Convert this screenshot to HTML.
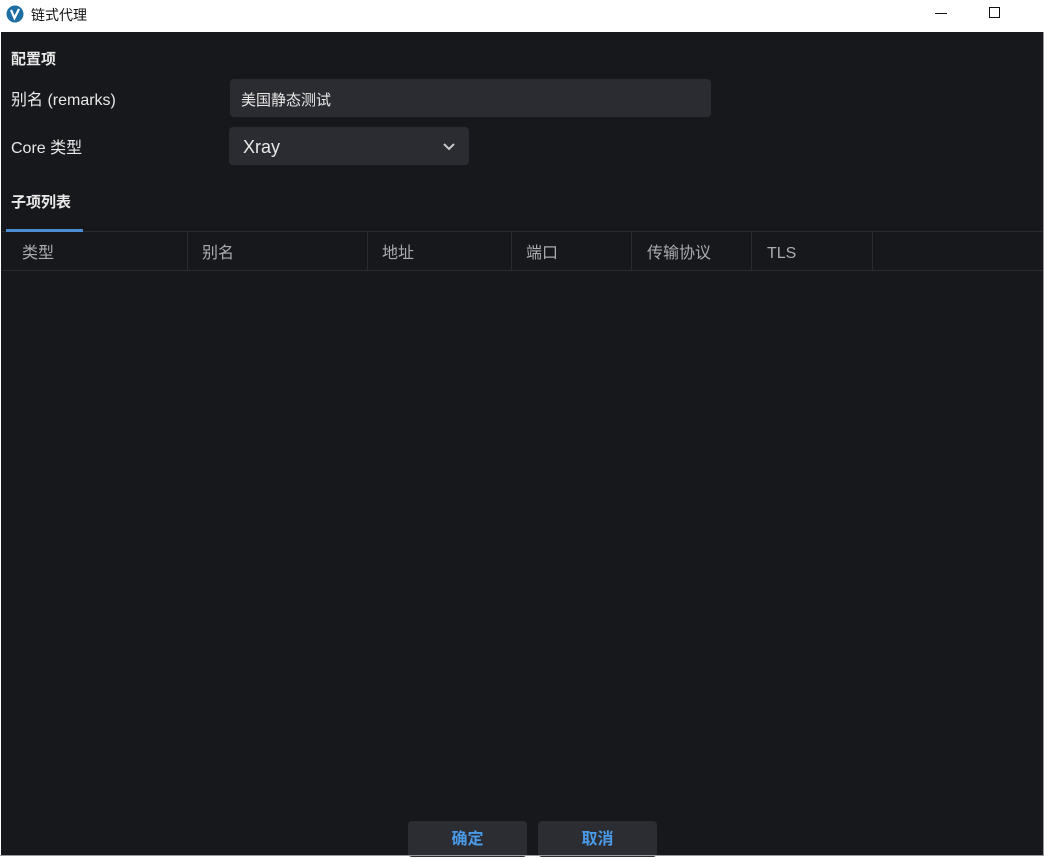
<!DOCTYPE html>
<html><head><meta charset="utf-8"><style>
*{margin:0;padding:0;box-sizing:border-box}
body{width:1044px;height:856px;background:#fff;position:relative;overflow:hidden;font-family:"Liberation Sans","Noto Sans CJK SC",sans-serif;}
.t{position:absolute;white-space:nowrap;line-height:20px;height:20px}
#main{position:absolute;left:1px;top:32px;width:1042px;height:823px;background:#17181c;}
.lab{color:#e8e8e8;font-size:16px}
.col{position:absolute;top:232px;height:38px;border-left:1px solid #2a2b30}
.hd{color:#a9abb0;font-size:16px;top:244px}
.btn{position:absolute;top:821px;width:119px;height:36px;background:#2c2d32;border-radius:4px;color:#4a9ae8;font-size:16px;font-weight:bold;text-align:center;line-height:38px}
</style></head><body>
<svg style="position:absolute;left:6px;top:5px" width="18" height="18" viewBox="0 0 18 18"><circle cx="9" cy="9" r="8.5" fill="#1d6fa3"/><path d="M5 5 L8.5 13 L13 4" stroke="#fff" stroke-width="2.2" fill="none"/></svg>
<div class="t" style="left:31px;top:5px;font-size:14px;color:#111">链式代理</div>
<div style="position:absolute;left:935px;top:13px;width:12px;height:1px;background:#111"></div>
<div style="position:absolute;left:989px;top:7px;width:11px;height:11px;border:1px solid #111"></div>
<div id="main"></div>
<div class="t lab" style="left:11px;top:50px;font-weight:bold;font-size:15px">配置项</div>
<div class="t lab" style="left:11px;top:91px">别名 (remarks)</div>
<div style="position:absolute;left:230px;top:79px;width:481px;height:38px;background:#2b2c31;border-radius:4px"></div>
<div class="t lab" style="left:241px;top:91px;font-size:15px">美国静态测试</div>
<div class="t lab" style="left:11px;top:139px">Core 类型</div>
<div style="position:absolute;left:229px;top:127px;width:240px;height:38px;background:#2b2c31;border-radius:4px"></div>
<div class="t lab" style="left:243px;top:137px;font-size:18px">Xray</div>
<svg style="position:absolute;left:442px;top:141px" width="14" height="10"><path d="M2 3 L7 8 L12 3" stroke="#c8c8c8" stroke-width="2" fill="none"/></svg>
<div class="t lab" style="left:11px;top:193px;font-weight:bold;font-size:15px">子项列表</div>
<div style="position:absolute;left:1px;top:231px;width:1042px;height:1px;background:#2a2b30"></div>
<div style="position:absolute;left:6px;top:229px;width:77px;height:3px;background:#4a8ed0"></div>
<div style="position:absolute;left:1px;top:270px;width:1042px;height:1px;background:#2a2b30"></div>
<div class="col" style="left:187px"></div><div class="col" style="left:367px"></div><div class="col" style="left:511px"></div><div class="col" style="left:631px"></div><div class="col" style="left:751px"></div><div class="col" style="left:872px"></div>
<div class="t hd" style="left:22px">类型</div>
<div class="t hd" style="left:202px">别名</div>
<div class="t hd" style="left:382px">地址</div>
<div class="t hd" style="left:526px">端口</div>
<div class="t hd" style="left:647px">传输协议</div>
<div class="t hd" style="left:767px">TLS</div>
<div class="btn" style="left:408px">确定</div>
<div class="btn" style="left:538px">取消</div>
<div style="position:absolute;left:0;top:855px;width:1044px;height:1px;background:#9a9a9a"></div>
<div style="position:absolute;left:1043px;top:32px;width:1px;height:824px;background:#9a9a9a"></div>
</body></html>
